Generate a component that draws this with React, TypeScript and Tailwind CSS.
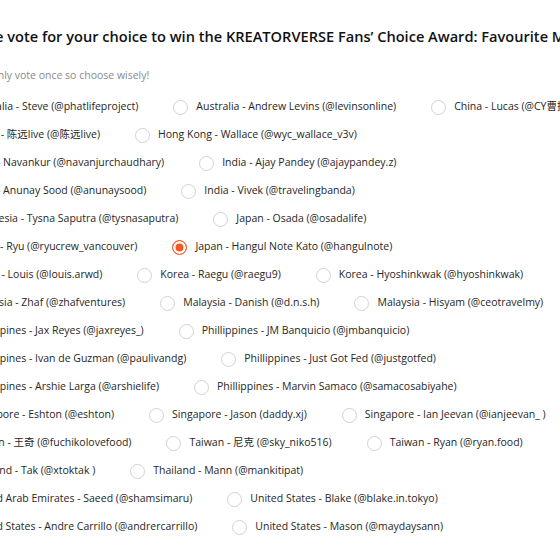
const rows: string[][] = [
  ["Australia - Steve (@phatlifeproject)", "Australia - Andrew Levins (@levinsonline)", "China - Lucas (@CY曹操说)"],
  ["China - 陈远live (@陈远live)", "Hong Kong - Wallace (@wyc_wallace_v3v)"],
  ["India - Navankur (@navanjurchaudhary)", "India - Ajay Pandey (@ajaypandey.z)"],
  ["India - Anunay Sood (@anunaysood)", "India - Vivek (@travelingbanda)"],
  ["Indonesia - Tysna Saputra (@tysnasaputra)", "Japan - Osada (@osadalife)"],
  ["Japan - Ryu (@ryucrew_vancouver)", "Japan - Hangul Note Kato (@hangulnote)"],
  ["Korea - Louis (@louis.arwd)", "Korea - Raegu (@raegu9)", "Korea - Hyoshinkwak (@hyoshinkwak)"],
  ["Malaysia - Zhaf (@zhafventures)", "Malaysia - Danish (@d.n.s.h)", "Malaysia - Hisyam (@ceotravelmy)"],
  ["Phillippines - Jax Reyes (@jaxreyes_)", "Phillippines - JM Banquicio (@jmbanquicio)"],
  ["Phillippines - Ivan de Guzman (@paulivandg)", "Phillippines - Just Got Fed (@justgotfed)"],
  ["Phillippines - Arshie Larga (@arshielife)", "Phillippines - Marvin Samaco (@samacosabiyahe)"],
  ["Singapore - Eshton (@eshton)", "Singapore - Jason (daddy.xj)", "Singapore - Ian Jeevan (@ianjeevan_ )"],
  ["Taiwan - 王奇 (@fuchikolovefood)", "Taiwan - 尼克 (@sky_niko516)", "Taiwan - Ryan (@ryan.food)"],
  ["Thailand - Tak (@xtoktak )", "Thailand - Mann (@mankitipat)"],
  ["United Arab Emirates - Saeed (@shamsimaru)", "United States - Blake (@blake.in.tokyo)"],
  ["United States - Andre Carrillo (@andrercarrillo)", "United States - Mason (@maydaysann)"],
];

const App = () => {
  const fam = "font-['Open_Sans','Noto_Sans_CJK_SC',sans-serif]";
  return (
    <div className={`w-[560px] h-[560px] overflow-hidden bg-white whitespace-nowrap ${fam}`}>
      <div className="pt-[26px] ml-[-42px]">
        <h1 className="text-[14.6px] leading-5 font-semibold text-[#111]">
          Please vote for your choice to win the KREATORVERSE Fans’ Choice Award: Favourite Most Inspiring Creator
        </h1>
      </div>
      <p className="mt-[21px] ml-[-50px] text-[10.5px] leading-4 text-[#8a8a8a]">
        You can only vote once so choose wisely!
      </p>
      <div className="mt-[10px] ml-[-53px] flex flex-col">
        {rows.map((row, i) => (
          <div key={i} className="flex h-7 items-center gap-x-[35px]">
            {row.map((name) => (
              <label key={name} className="flex items-center gap-2 text-[10.5px] text-[#262626]">
                <input
                  type="radio"
                  name="vote"
                  defaultChecked={name.startsWith("Japan - Hangul")}
                  className="appearance-none m-0 w-[15px] h-[15px] shrink-0 rounded-full border border-[#d2d2d2] bg-white checked:border-[#f15a24] checked:bg-[#f15a24] checked:shadow-[inset_0_0_0_2.5px_#fff]"
                />
                <span>{name}</span>
              </label>
            ))}
          </div>
        ))}
      </div>
    </div>
  );
};

export default App;
